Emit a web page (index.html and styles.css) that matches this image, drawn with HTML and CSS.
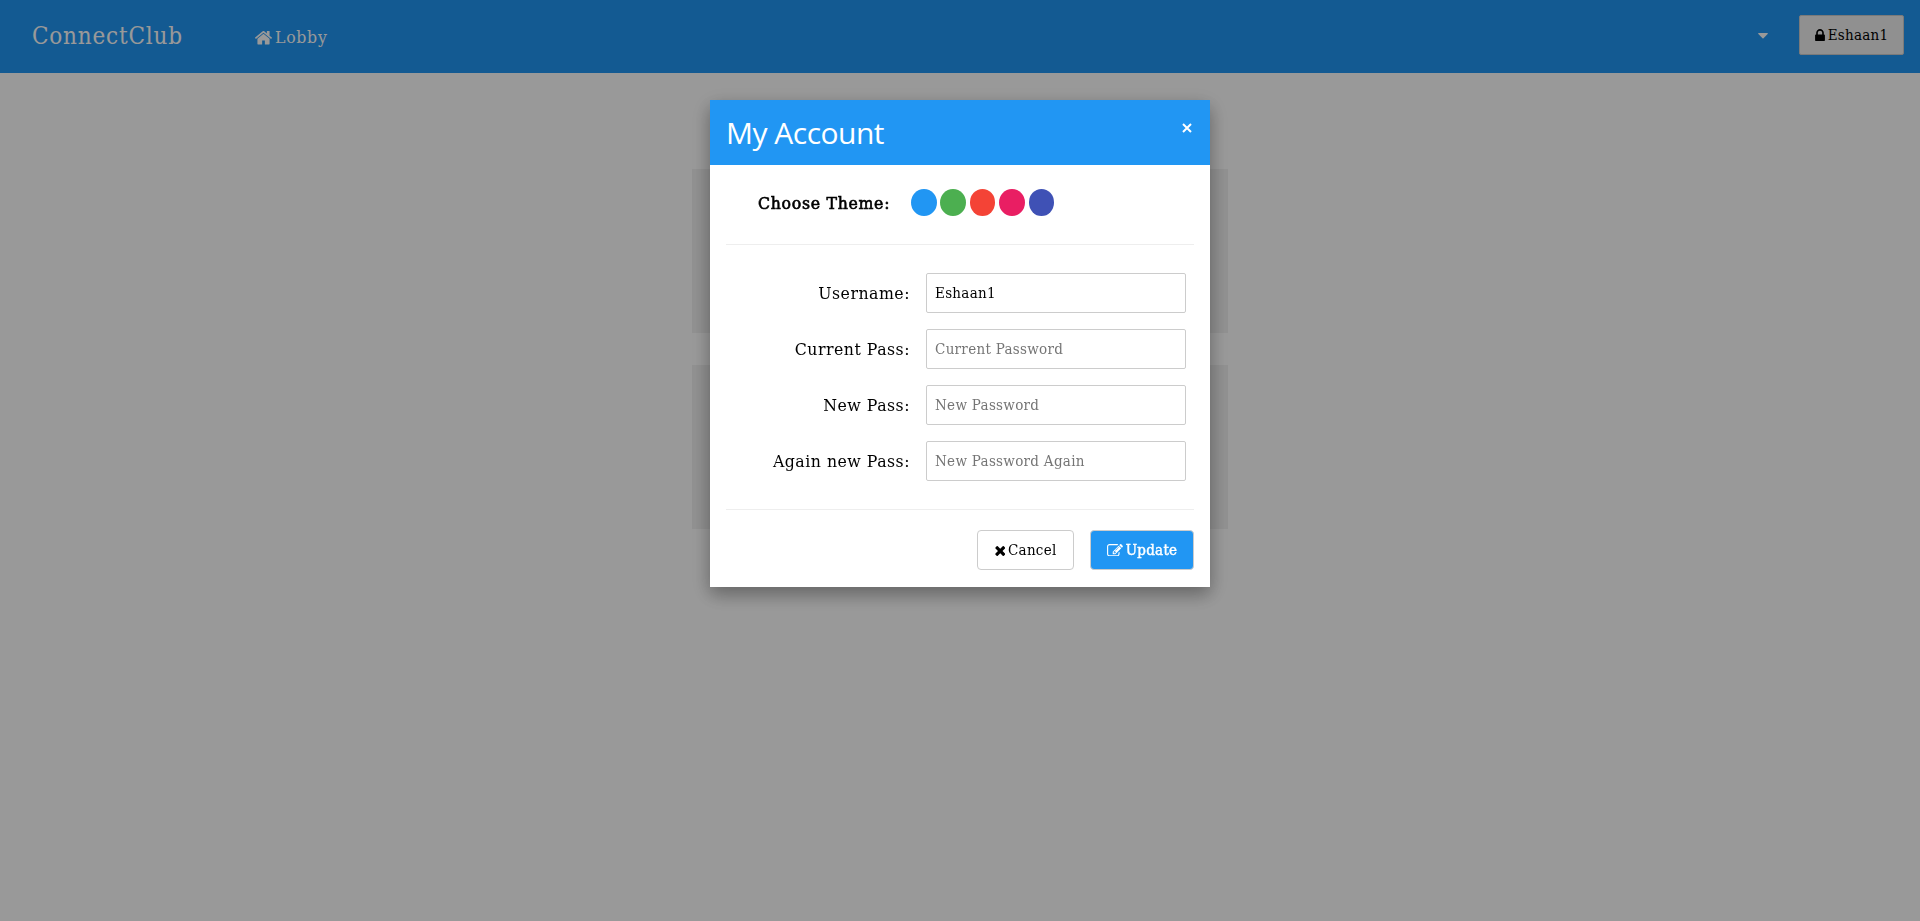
FILE: index.html
```html
<!DOCTYPE html>
<html lang="en">
<head>
<meta charset="utf-8">
<title>ConnectClub</title>
<link rel="stylesheet" href="styles.css">
</head>
<body>
<header class="navbar">
  <a class="brand">ConnectClub</a>
  <a class="nav-link">
    <svg class="icon-home" viewBox="89 256 1614 1280"><path d="M1472 992v480q0 26-19 45t-45 19h-384v-384h-256v384h-384q-26 0-45-19t-19-45v-480q0-1 .5-3t.5-3l575-474 575 474q1 2 1 6zm223-69l-62 74q-8 9-21 11h-3q-13 0-21-7l-692-577-692 577q-12 8-24 7-13-2-21-11l-62-74q-8-10-7-23.5t11-21.5l719-599q32-26 76-26t76 26l244 204v-195q0-14 9-23t23-9h192q14 0 23 9t9 23v408l219 182q10 8 11 21.5t-7 23.5z"/></svg>
    <span>Lobby</span>
  </a>
  <div class="nav-right">
    <svg class="icon-caret" viewBox="0 0 10 6"><path d="M.6 0h8.8q.8.3.2 1L5.5 5.300q-.5.400-1 0L.4 1Q-.2.3.6 0z"/></svg>
    <button class="btn user-btn">
      <svg class="icon-lock" viewBox="320 128 1152 1408"><path d="M640 768h512v-192q0-106-75-181t-181-75-181 75-75 181v192zm832 96v576q0 40-28 68t-68 28h-960q-40 0-68-28t-28-68v-576q0-40 28-68t68-28h32v-192q0-184 132-316t316-132 316 132 132 316v192h32q40 0 68 28t28 68z"/></svg>
      <span>Eshaan1</span>
    </button>
  </div>
</header>
<main class="content">
  <section class="card"></section>
  <section class="card"></section>
</main>
<div class="overlay">
  <div class="modal">
    <div class="modal-header">
      <h2>My Account</h2>
      <svg class="icon-close" viewBox="0 0 10 10"><path d="M1 1l8 8M9 1L1 9"/></svg>
    </div>
    <div class="modal-body">
      <div class="theme">
        <span class="theme-label">Choose Theme:</span>
        <div class="swatches">
          <i class="swatch blue"></i><i class="swatch green"></i><i class="swatch red"></i><i class="swatch pink"></i><i class="swatch indigo"></i>
        </div>
      </div>
      <div class="fields">
        <label>Username:</label><input type="text" value="Eshaan1">
        <label>Current Pass:</label><input type="password" placeholder="Current Password">
        <label>New Pass:</label><input type="password" placeholder="New Password">
        <label>Again new Pass:</label><input type="password" placeholder="New Password Again">
      </div>
      <div class="actions">
        <button class="btn cancel">
          <svg class="icon-times" viewBox="302 238 1188 1316"><path d="M1490 1322q0 40-28 68l-136 136q-28 28-68 28t-68-28l-294-294-294 294q-28 28-68 28t-68-28l-136-136q-28-28-28-68t28-68l294-294-294-294q-28-28-28-68t28-68l136-136q28-28 68-28t68 28l294 294 294-294q28-28 68-28t68 28l136 136q28 28 28 68t-28 68l-294 294 294 294q28 28 28 68z"/></svg>
          <span>Cancel</span>
        </button>
        <button class="btn update">
          <svg class="icon-edit" viewBox="0 128 1792 1408"><path d="M888 1184l116-116-152-152-116 116v56h96v96h56zm440-720q-16-16-33 1l-350 350q-17 17-1 33t33-1l350-350q17-17 1-33zm80 594v190q0 119-84.500 203.500t-203.500 84.500h-832q-119 0-203.500-84.500t-84.500-203.500v-832q0-119 84.500-203.500t203.500-84.500h832q63 0 117 25 15 7 18 23 3 17-9 29l-49 49q-14 14-32 8-23-6-45-6h-832q-66 0-113 47t-47 113v832q0 66 47 113t113 47h832q66 0 113-47t47-113v-126q0-13 9-22l64-64q15-15 35-7t20 29zm-96-738l288 288-672 672h-288v-288zm444 132l-92 92-288-288 92-92q28-28 68-28t68 28l152 152q28 28 28 68t-28 68z"/></svg>
          <span>Update</span>
        </button>
      </div>
    </div>
  </div>
</div>
</body>
</html>
```
FILE: styles.css
```css
* { box-sizing: border-box; }
body {
  margin: 0;
  height: 100vh;
  overflow: hidden;
  background: #fff;
  color: #000;
  font-family: "DejaVu Serif Condensed", "DejaVu Serif", serif;
}
svg { display: block; flex: none; fill: currentColor; }
.navbar {
  display: flex;
  height: 73px;
  padding: 0 16px 0 32px;
  background: #2196f3;
  color: #fff;
}
.brand { width: 223px; padding-top: 20px; font-size: 24px; line-height: 32px; letter-spacing: .8px; white-space: nowrap; }
.nav-link { display: flex; gap: 3px; padding-top: 24px; font-size: 17.5px; line-height: 26px; letter-spacing: .7px; }
.icon-home { width: 17px; height: 13.5px; margin-top: 7px; }
.nav-right { display: flex; align-items: flex-start; margin-left: auto; }
.icon-caret { width: 10px; height: 6px; margin: 33px 31px 0 0; }
.btn {
  display: flex;
  align-items: center;
  justify-content: center;
  gap: 3px;
  height: 40px;
  padding: 0;
  border: 1px solid #ccc;
  border-radius: 4px;
  background: #fff;
  color: #000;
  font-family: inherit;
  font-size: 15px;
  letter-spacing: .25px;
}
.user-btn { width: 105px; margin-top: 15px; border-radius: 2px; background: #f1f1f1; }
.icon-lock { width: 10px; height: 12px; }
.content { display: flex; flex-direction: column; align-items: center; gap: 32px; padding-top: 96px; }
.card { width: 536px; height: 164px; background: #f1f1f1; }
.overlay { position: fixed; inset: 0; padding-top: 100px; background: rgba(0, 0, 0, .4); }
.modal {
  width: 500px;
  height: 487px;
  margin: 0 auto;
  background: #fff;
  box-shadow: 0 8px 16px 0 rgba(0, 0, 0, .2), 0 6px 20px 0 rgba(0, 0, 0, .19);
}
.modal-header {
  display: flex;
  justify-content: space-between;
  height: 65px;
  padding: 10px 18px 0 16px;
  background: #2196f3;
  color: #fff;
}
.modal-header h2 { margin: 0; font: 400 30px/45px "Open Sans", sans-serif; letter-spacing: -.5px; white-space: nowrap; }
.icon-close { width: 10px; height: 10px; margin-top: 13px; fill: none; stroke: #fff; stroke-width: 2; }
.modal-body { padding: 0 16px; }
.theme { display: flex; height: 80px; padding: 24px 0 0 32px; border-bottom: 1px solid #eee; }
.theme-label {
  width: 153px;
  font-size: 17.5px;
  line-height: 28px;
  letter-spacing: .7px;
  white-space: nowrap;
  -webkit-text-stroke: .6px currentColor;
}
.swatches { display: flex; gap: 3.8px; }
.swatch { width: 25.6px; height: 27px; border-radius: 50%; }
.blue { background: #2196f3; }
.green { background: #4caf50; }
.red { background: #f44336; }
.pink { background: #e91e63; }
.indigo { background: #3f51b5; }
.fields {
  display: grid;
  grid-template-columns: 184px 260px;
  grid-auto-rows: 40px;
  gap: 16px;
  height: 265px;
  padding-top: 28px;
  border-bottom: 1px solid #eee;
}
.fields label { font-size: 17.5px; line-height: 40px; letter-spacing: .5px; text-align: right; white-space: nowrap; }
.fields input {
  width: 260px;
  height: 40px;
  padding: 0 8px;
  border: 1px solid #ccc;
  border-radius: 2px;
  font-family: inherit;
  font-size: 15px;
  letter-spacing: .3px;
  outline: none;
}
.fields input::placeholder { color: #757575; }
.actions { display: flex; justify-content: flex-end; gap: 16px; padding-top: 20px; }
.cancel { width: 97px; }
.update { width: 104px; background: #2196f3; color: #fff; -webkit-text-stroke: .4px currentColor; }
.icon-times { width: 10.5px; height: 11px; }
.icon-edit { width: 16px; height: 12.5px; }
```
